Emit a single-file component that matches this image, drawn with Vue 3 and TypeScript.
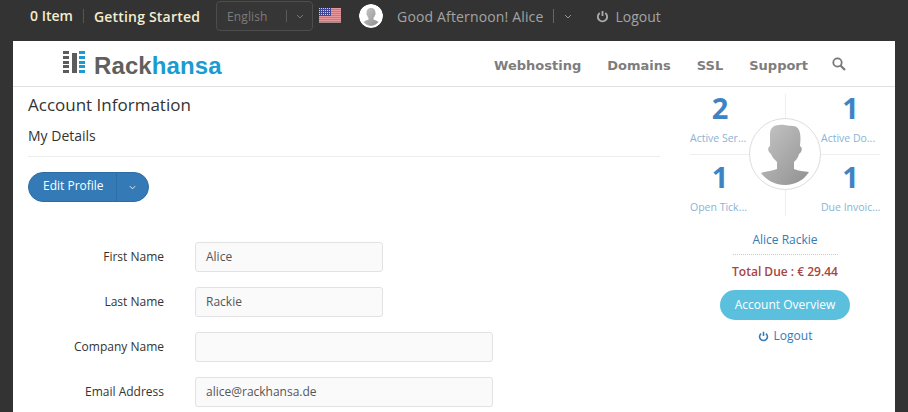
<script setup lang="ts">
interface Stat { value: number; label: string }
interface Field { label: string; value: string; wide: boolean }

const stats: Stat[] = [
  { value: 2, label: 'Active Ser...' },
  { value: 1, label: 'Active Do...' },
  { value: 1, label: 'Open Tick...' },
  { value: 1, label: 'Due Invoic...' },
]
const fields: Field[] = [
  { label: 'First Name', value: 'Alice', wide: false },
  { label: 'Last Name', value: 'Rackie', wide: false },
  { label: 'Company Name', value: '', wide: true },
  { label: 'Email Address', value: 'alice@rackhansa.de', wide: true },
]
const nav: string[] = ['Webhosting', 'Domains', 'SSL', 'Support']
const logoRows: number[] = [0, 1, 2, 3, 4]
const stripes: number[] = [0, 2, 4, 6, 8, 10, 12]
</script>

<template>
  <div class="page">
    <header class="topbar">
      <span class="cart">0 Item</span>
      <span class="started">Getting Started</span>
      <div class="lang">
        <span class="lang-text">English</span>
        <span class="lang-sep"></span>
        <svg class="chev" viewBox="0 0 8 5" width="8" height="5"><path d="M1 1l3 3 3-3" fill="none" stroke="#777" stroke-width="1" /></svg>
      </div>
      <svg class="flag" viewBox="0 0 22 16" width="22" height="16">
        <defs>
          <pattern id="stars" width="2" height="2" patternUnits="userSpaceOnUse">
            <rect width="2" height="2" fill="#3f4796" />
            <rect width="1" height="1" fill="#c9cde8" />
          </pattern>
        </defs>
        <rect width="22" height="15" fill="#fff" />
        <rect v-for="s in stripes" :key="s" x="0" :y="s + 0.5" width="22" height="1.2" fill="#d0323c" />
        <rect x="0" y="0" width="12" height="8" fill="url(#stars)" />
        <rect x="0" y="14.500" width="22" height="1.500" fill="#5a1c20" />
      </svg>
      <div class="top-avatar">
        <svg viewBox="0 0 24 24" width="24" height="24">
          <defs><linearGradient id="ta" x1="0" y1="0" x2="1" y2="1"><stop offset="0" stop-color="#c8c8c8" /><stop offset="1" stop-color="#8f8f8f" /></linearGradient></defs>
          <circle cx="12" cy="12" r="12" fill="#fff" />
          <path d="M12 4c3.200 0 4.600 2.200 4.400 5 .5.3.3 1.600-.3 2-.4 1.300-1 2.300-1.600 3v1.500c1.500.8 3.600 1.300 5 2.500A11 11 0 0 1 12 22a11 11 0 0 1-7.500-4c1.400-1.200 3.500-1.700 5-2.500V14c-.6-.7-1.200-1.700-1.600-3-.6-.4-.8-1.700-.3-2C7.400 6.200 8.800 4 12 4z" fill="url(#ta)" />
        </svg>
      </div>
      <span class="greet">Good Afternoon! Alice</span>
      <span class="greet-sep"></span>
      <svg class="chev greet-chev" viewBox="0 0 8 5" width="8" height="5"><path d="M1 1l3 3 3-3" fill="none" stroke="#999" stroke-width="1" /></svg>
      <svg class="power top-power" viewBox="0 0 14 14" width="13" height="13"><path d="M4 3.200a5 5 0 1 0 6 0M7 1v5.500" fill="none" stroke="#aaa" stroke-width="2" /></svg>
      <span class="top-logout">Logout</span>
    </header>

    <main class="sheet">
      <div class="masthead">
        <div class="logo">
          <div class="logo-mark">
            <div class="logo-col">
              <i v-for="r in logoRows" :key="r" class="dark"></i>
            </div>
            <div class="logo-bar"></div>
            <div class="logo-col">
              <i v-for="r in logoRows" :key="r" class="blue"></i>
            </div>
          </div>
          <span class="logo-text">Rack<b>hansa</b></span>
        </div>
        <nav class="nav">
          <a v-for="n in nav" :key="n">{{ n }}</a>
          <svg class="search" viewBox="0 0 14 14" width="14" height="14"><circle cx="5.500" cy="5.500" r="4.200" fill="none" stroke="#777" stroke-width="1.800" /><path d="M8.700 8.700l4.300 4.300" stroke="#777" stroke-width="2.200" /></svg>
        </nav>
      </div>

      <div class="content">
        <section class="left">
          <h1>Account Information</h1>
          <h2>My Details</h2>
          <div class="split">
            <span class="split-main">Edit Profile</span>
            <span class="split-caret">
              <svg viewBox="0 0 8 5" width="7" height="5"><path d="M1 1l3 3 3-3" fill="none" stroke="#fff" stroke-width="1" /></svg>
            </span>
          </div>
          <form class="form">
            <div v-for="f in fields" :key="f.label" class="row">
              <label>{{ f.label }}</label>
              <div class="input" :class="{ wide: f.wide }">{{ f.value }}</div>
            </div>
          </form>
        </section>

        <aside class="side">
          <div class="stats">
            <div v-for="(s, i) in stats" :key="i" class="stat">
              <strong>{{ s.value }}</strong>
              <span>{{ s.label }}</span>
            </div>
            <div class="portrait">
              <svg viewBox="0 0 70 70" width="70" height="70">
                <defs><linearGradient id="pg" x1="0" y1="0" x2="1" y2="1"><stop offset="0" stop-color="#c6c6c6" /><stop offset="1" stop-color="#909090" /></linearGradient></defs>
                <path d="M20 15C20 9 24 6 29 6C34 5 38 7 43 7C47 7 49 10 50 14C51 20 50 25 50 27C53 29 52 33 49 35C48 39 46 41 44 43L44 50C48 52 54 52 59 53C54 61 45 66 35 66C25 66 16 61 11 54C16 52 23 52 27 50L27 43C25 41 22 38 21 35C18 33 17 29 20 27C20 22 20 19 20 15Z" fill="url(#pg)" />
              </svg>
            </div>
          </div>
          <div class="name">Alice Rackie</div>
          <div class="due">Total Due : € 29.44</div>
          <div class="overview">Account Overview</div>
          <div class="side-logout">
            <svg class="power" viewBox="0 0 14 14" width="11" height="11"><path d="M4 3.200a5 5 0 1 0 6 0M7 1v5.500" fill="none" stroke="#337ab7" stroke-width="2" /></svg>
            <span>Logout</span>
          </div>
        </aside>
      </div>
    </main>
  </div>
</template>

<style>
html, body { margin: 0; background: #333; overflow: hidden; }
</style>

<style scoped>
.page {
  width: 908px;
  height: 412px;
  background: #333;
  font-family: "Open Sans", sans-serif;
  overflow: hidden;
}
.topbar {
  height: 41px;
  display: flex;
  align-items: center;
  box-sizing: border-box;
  padding: 0 0 9px 30px;
  font-size: 14px;
}
.cart {
  color: #f3edcf;
  font-weight: 600;
  padding-right: 10px;
  border-right: 1px solid #555;
  line-height: 14px;
}
.started {
  color: #f3edcf;
  font-weight: 600;
  margin-left: 10px;
  letter-spacing: 0.2px;
}
.lang {
  width: 97px;
  height: 30px;
  box-sizing: border-box;
  margin-left: 16px;
  border: 1px solid #4d4d4d;
  border-radius: 4px;
  background: #363636;
  display: flex;
  align-items: center;
  padding-left: 10px;
}
.lang-text { color: #7c7c7c; font-size: 12px; width: 59px; letter-spacing: 0.1px; }
.lang-sep { width: 1px; height: 12px; background: #5a5a5a; }
.lang .chev { margin-left: 9px; }
.flag { margin-left: 6px; }
.top-avatar {
  width: 24px;
  height: 24px;
  margin-left: 18px;
  border-radius: 50%;
  overflow: hidden;
}
.top-avatar svg { display: block; }
.greet { margin-left: 14px; color: #a3a3a3; letter-spacing: 0.15px; }
.greet-sep { width: 1px; height: 14px; background: #666; margin-left: 10px; }
.greet-chev { margin-left: 10px; }
.top-power { margin-left: 24px; }
.top-logout { margin-left: 6px; color: #a3a3a3; }

.sheet {
  width: 882px;
  margin-left: 13px;
  height: 371px;
  background: #fff;
}
.masthead {
  height: 46px;
  box-sizing: border-box;
  border-bottom: 1px solid #e0e0e0;
  display: flex;
  align-items: center;
  justify-content: space-between;
  padding: 0 49px 0 50px;
}
.logo { display: flex; align-items: center; }
.logo-mark { display: flex; height: 22px; margin-top: -3px; }
.logo-col {
  width: 6px;
  display: flex;
  flex-direction: column;
  justify-content: space-between;
}
.logo-col i { display: block; height: 3px; }
.logo-col .dark { background: #5c5c5c; }
.logo-col .blue { background: #1b9bd1; }
.logo-bar { width: 5px; background: #5c5c5c; margin: 2px 2px 0 3px; }
.logo-text {
  margin-left: 9px;
  margin-top: 4px;
  font-family: "Liberation Sans", sans-serif;
  font-weight: 700;
  font-size: 24px;
  letter-spacing: 0.1px;
  color: #5f5f5f;
  line-height: 30px;
}
.logo-text b { color: #1b9bd1; }
.nav {
  display: flex;
  align-items: center;
  font-family: "DejaVu Sans", sans-serif;
  font-weight: 700;
  font-size: 13px;
  color: #7d7d7d;
  gap: 26px;
  padding-top: 3px;
}
.nav .search { margin-left: -2px; margin-top: -2px; }

.content {
  display: flex;
  justify-content: space-between;
  padding: 0 15px;
}
.left { width: 632px; }
h1 {
  margin: 6px 0 0;
  font-size: 17px;
  font-weight: 400;
  line-height: 24px;
  color: #333;
}
h2 {
  margin: 9px 0 0;
  padding-bottom: 10px;
  border-bottom: 1px solid #eee;
  font-size: 14px;
  font-weight: 400;
  line-height: 20px;
  color: #333;
}
.split {
  margin-top: 15px;
  width: 121px;
  height: 30px;
  display: flex;
  background: #337ab7;
  border: 1px solid #2e6da4;
  box-sizing: border-box;
  border-radius: 15px;
  color: #fff;
  font-size: 12px;
}
.split-main {
  width: 88px;
  box-sizing: border-box;
  padding-left: 14px;
  line-height: 26px;
  border-right: 1px solid #2e6da4;
}
.split-caret {
  flex: 1;
  display: flex;
  align-items: center;
  justify-content: center;
  padding-top: 1px;
}
.form { margin-top: 40px; }
.row {
  display: flex;
  align-items: center;
  height: 30px;
  margin-bottom: 15px;
}
.row label {
  width: 136px;
  text-align: right;
  font-size: 12px;
  color: #333;
  margin-top: -2px;
}
.input {
  margin-left: 31px;
  width: 188px;
  height: 30px;
  box-sizing: border-box;
  border: 1px solid #e2e2e2;
  border-radius: 3px;
  background: #fafafa;
  padding-left: 10px;
  font-size: 12px;
  line-height: 28px;
  color: #555;
}
.input.wide { width: 298px; }

.side {
  width: 190px;
  display: flex;
  flex-direction: column;
  align-items: center;
}
.stats {
  position: relative;
  width: 190px;
  height: 122px;
  margin-top: 7px;
  display: grid;
  grid-template-columns: 96px 94px;
  grid-template-rows: 61px 61px;
}
.stat {
  box-sizing: border-box;
  display: flex;
  flex-direction: column;
  align-items: center;
  border-color: #eee;
  border-style: solid;
  border-width: 0;
}
.stat:nth-child(odd) { padding-right: 35px; }
.stat:nth-child(even) { padding-left: 35px; }
.stat:nth-child(1) { border-right-width: 1px; border-bottom-width: 1px; }
.stat:nth-child(2) { border-bottom-width: 1px; }
.stat:nth-child(3) { border-right-width: 1px; }
.stat strong {
  font-size: 29px;
  line-height: 30px;
  font-weight: 700;
  color: #3e84c4;
  margin-top: -1px;
}
.stat span {
  align-self: flex-start;
  margin-top: 8px;
  font-size: 10.5px;
  line-height: 14px;
  color: #89b4d6;
  white-space: nowrap;
}
.stat:nth-child(3) strong, .stat:nth-child(4) strong { margin-top: 7px; }
.portrait {
  position: absolute;
  left: 59px;
  top: 24px;
  width: 72px;
  height: 72px;
  box-sizing: border-box;
  border: 1px solid #ddd;
  border-radius: 50%;
  background: #fff;
  overflow: hidden;
}
.portrait svg { display: block; }
.name {
  margin-top: 15px;
  width: 105px;
  text-align: center;
  padding-bottom: 5px;
  border-bottom: 1px dotted #ccc;
  font-size: 12px;
  line-height: 18px;
  color: #337ab7;
}
.due {
  margin-top: 8px;
  font-size: 12px;
  font-weight: 600;
  line-height: 18px;
  color: #a94442;
}
.overview {
  margin-top: 9px;
  width: 130px;
  height: 30px;
  border-radius: 15px;
  background: #5bc0de;
  color: #fff;
  font-size: 12px;
  line-height: 30px;
  text-align: center;
}
.side-logout {
  margin-top: 7px;
  display: flex;
  align-items: center;
  gap: 5px;
  font-size: 12px;
  line-height: 18px;
  color: #337ab7;
}
</style>
